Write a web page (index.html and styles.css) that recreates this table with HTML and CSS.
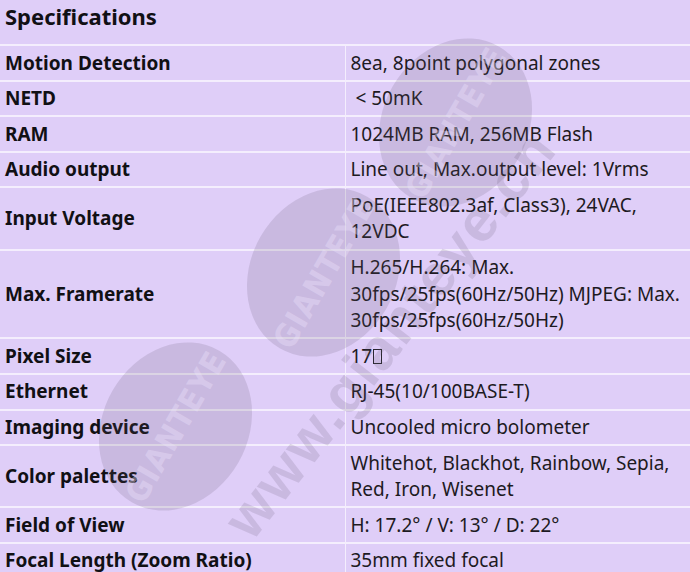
FILE: index.html
```html
<!DOCTYPE html>
<html lang="en">
<head>
    <meta charset="UTF-8">
    <title>Specifications</title>
    <link rel="stylesheet" href="styles.css">
</head>
<body>
    <div class="spec-wrap">
        <table class="spec-table">
            <tr class="spec-head">
                <th colspan="2">Specifications</th>
            </tr>
            <tr><td class="key">Motion Detection</td><td class="val">8ea, 8point polygonal zones</td></tr>
            <tr><td class="key">NETD</td><td class="val">&nbsp;&lt; 50mK</td></tr>
            <tr><td class="key">RAM</td><td class="val">1024MB RAM, 256MB Flash</td></tr>
            <tr><td class="key">Audio output</td><td class="val">Line out, Max.output level: 1Vrms</td></tr>
            <tr><td class="key">Input Voltage</td><td class="val">PoE(IEEE802.3af, Class3), 24VAC,<br>12VDC</td></tr>
            <tr><td class="key">Max. Framerate</td><td class="val">H.265/H.264: Max.<br>30fps/25fps(60Hz/50Hz) MJPEG: Max.<br>30fps/25fps(60Hz/50Hz)</td></tr>
            <tr><td class="key">Pixel Size</td><td class="val">17<span class="missing"></span></td></tr>
            <tr><td class="key">Ethernet</td><td class="val">RJ-45(10/100BASE-T)</td></tr>
            <tr><td class="key">Imaging device</td><td class="val">Uncooled micro bolometer</td></tr>
            <tr><td class="key">Color palettes</td><td class="val">Whitehot, Blackhot, Rainbow, Sepia,<br>Red, Iron, Wisenet</td></tr>
            <tr><td class="key">Field of View</td><td class="val">H: 17.2° / V: 13° / D: 22°</td></tr>
            <tr><td class="key">Focal Length (Zoom Ratio)</td><td class="val">35mm fixed focal</td></tr>
        </table>

        <!-- watermark -->
        <div class="wm">
            <div class="wm-badge badge-1"><span>GIANTEYE</span></div>
            <div class="wm-badge badge-2"><span>GIANTEYE</span></div>
            <div class="wm-badge badge-3"><span>GIANTEYE</span></div>
            <div class="wm-url">www.gianteye.cn</div>
        </div>
    </div>
</body>
</html>
```

FILE: styles.css
```css
:root {
    --bg: #dfcef8;
    --line: #f4eefd;
    --text: #111014;
    --mark: rgba(95, 85, 105, 0.17);
    --mark-text: rgba(236, 226, 252, 0.4);
}

* {
    margin: 0;
    padding: 0;
    box-sizing: border-box;
}

body {
    background: var(--bg);
    font-family: 'Noto Sans', sans-serif;
    color: var(--text);
    overflow: hidden;
}

.spec-wrap {
    position: relative;
    width: 690px;
    height: 572px;
    overflow: hidden;
}

.spec-table {
    width: 690px;
    border-collapse: collapse;
    table-layout: fixed;
}

.spec-head th {
    text-align: left;
    font-size: 22px;
    font-weight: 700;
    line-height: 30px;
    padding: 1px 5px 13px;
}

.spec-table td {
    border-top: 2px solid var(--line);
    padding: 3.5px 5px;
    font-size: 19px;
    line-height: 26.6px;
    vertical-align: middle;
    white-space: nowrap;
}

.key {
    width: 345px;
    font-weight: 700;
}

.val {
    border-left: 1px solid var(--line);
    color: #1d1a22;
}

.missing {
    display: inline-block;
    width: 9px;
    height: 15px;
    border: 1px solid #2a2730;
    margin-left: 1px;
    vertical-align: -1px;
}

/* watermark */
.wm {
    position: absolute;
    inset: 0;
    pointer-events: none;
}

.wm-badge {
    position: absolute;
    width: 175px;
    height: 145px;
    border-radius: 50%;
    background: var(--mark);
    display: flex;
    align-items: center;
    justify-content: center;
    transform: rotate(-60deg);
}

.wm-badge span {
    font-family: 'DejaVu Sans Condensed', 'DejaVu Sans', sans-serif;
    font-weight: 700;
    font-size: 32px;
    letter-spacing: 1px;
    color: var(--mark-text);
}

.badge-1 { left: 368px; top: 50px; }
.badge-2 { left: 236px; top: 200px; }
.badge-3 { left: 88px; top: 354px; }

.wm-url {
    position: absolute;
    left: 140px;
    top: 300px;
    font-family: 'Liberation Sans', sans-serif;
    font-weight: 700;
    font-size: 58px;
    letter-spacing: 2px;
    color: var(--mark);
    transform: rotate(-52deg);
    white-space: nowrap;
}
```
